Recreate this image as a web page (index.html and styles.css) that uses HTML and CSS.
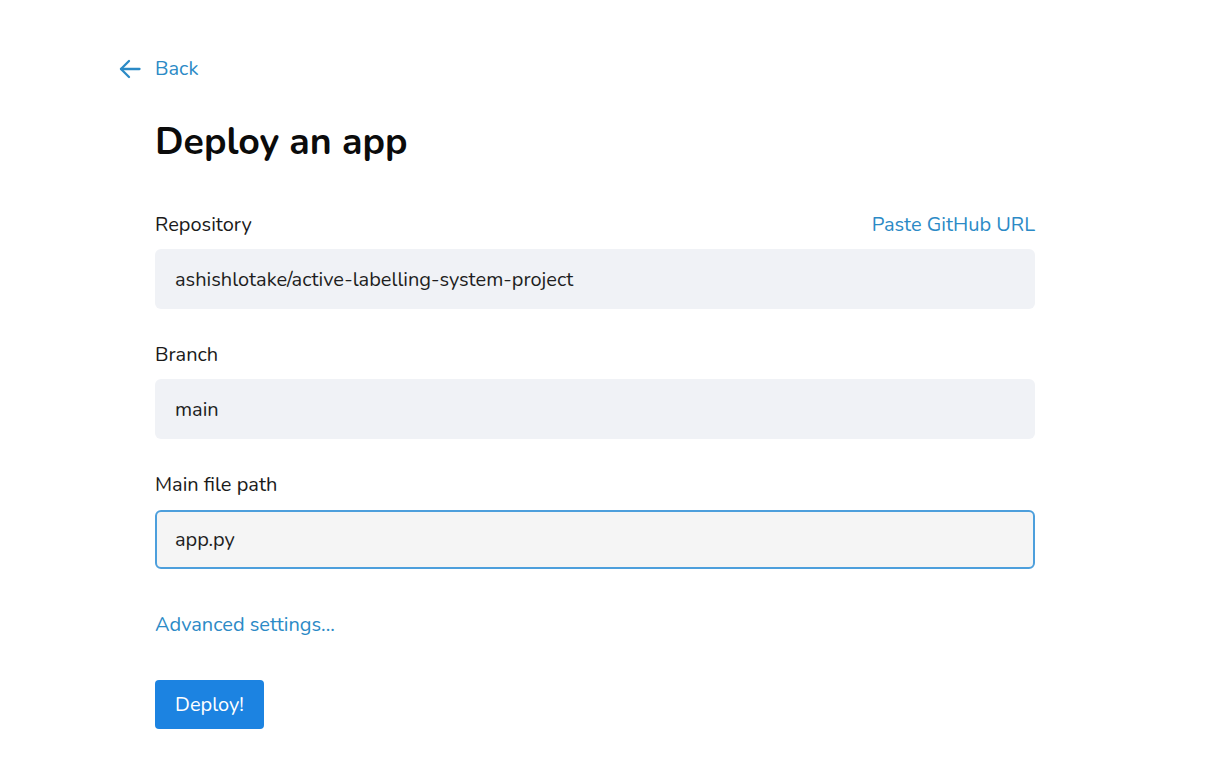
FILE: index.html
```html
<!DOCTYPE html>
<html lang="en">
<head>
<meta charset="utf-8">
<title>Deploy an app</title>
<link rel="stylesheet" href="styles.css">
</head>
<body>
<div class="page">
  <a class="back" href="#">
    <svg class="back-icon" width="22" height="22" viewBox="0 0 22 22" fill="none" stroke="currentColor" stroke-width="2.3" stroke-linecap="round" stroke-linejoin="round"><path d="M20.5 11H2"/><path d="M10 3l-8 8 8 8"/></svg>
    <span>Back</span>
  </a>
  <main class="form">
    <h1 class="title">Deploy an app</h1>
    <div class="field">
      <div class="label-row">
        <label class="label">Repository</label>
        <a class="link" href="#">Paste GitHub URL</a>
      </div>
      <div class="input">ashishlotake/active-labelling-system-project</div>
    </div>
    <div class="field">
      <div class="label-row"><label class="label">Branch</label></div>
      <div class="input">main</div>
    </div>
    <div class="field">
      <div class="label-row"><label class="label">Main file path</label></div>
      <div class="input input-focus">app.py</div>
    </div>
    <a class="link advanced" href="#">Advanced settings...</a>
    <button class="deploy">Deploy!</button>
  </main>
</div>
</body>
</html>
```
FILE: styles.css
```css
* { box-sizing: border-box; }
body {
  margin: 0;
  background: #ffffff;
  font-family: "Nunito", "Noto Sans", "Open Sans", sans-serif;
  color: #111111;
}
.page {
  padding: 55px 0 0 119px;
}
.back {
  display: flex;
  align-items: center;
  gap: 14px;
  color: #2b8ac6;
  text-decoration: none;
  font-size: 20px;
  line-height: 27px;
  height: 27px;
  width: max-content;
}
.back-icon { display: block; }
.form {
  margin-left: 36px;
  width: 880px;
  display: flex;
  flex-direction: column;
}
.title {
  margin: 39px 0 0;
  font-size: 37.5px;
  line-height: 42px;
  font-weight: 700;
  color: #0b0b0b;
}
.field {
  display: flex;
  flex-direction: column;
  margin-top: 48px;
}
.field + .field { margin-top: 32px; }
.label-row {
  display: flex;
  justify-content: space-between;
  align-items: center;
  height: 27px;
  margin-bottom: 11px;
}
.label {
  font-size: 20px;
  line-height: 27px;
  color: #1a1a1a;
}
.link {
  color: #2b8ac6;
  text-decoration: none;
  font-size: 20px;
  line-height: 27px;
}
.input {
  height: 60px;
  background: #f0f2f6;
  border-radius: 6px;
  border: 2px solid transparent;
  padding: 0 18px;
  display: flex;
  align-items: center;
  font-size: 20px;
  color: #1e1e1e;
}
.input-focus {
  background: #f5f5f5;
  border-color: #4d9fdc;
  margin-top: 1px;
  height: 59px;
}
.advanced {
  margin-top: 42px;
  width: max-content;
}
.deploy {
  margin-top: 42px;
  width: 109px;
  height: 49px;
  background: #1c83e1;
  color: #ffffff;
  border: none;
  border-radius: 4px;
  font-family: inherit;
  font-size: 20px;
  padding: 0;
}
```
